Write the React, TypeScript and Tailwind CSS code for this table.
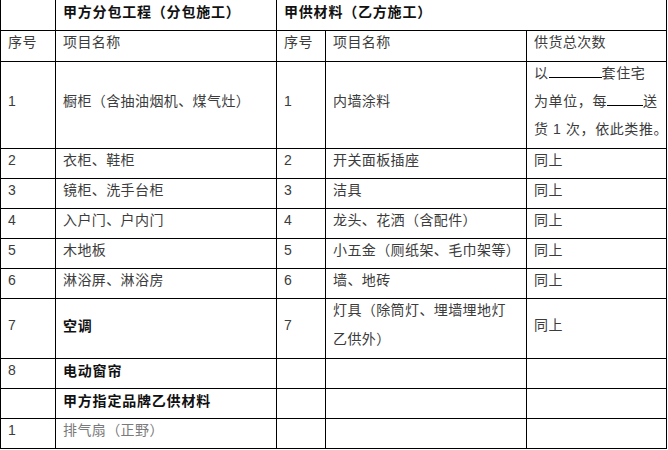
import React from "react";

const F = { fontFamily: '"Liberation Sans", "Noto Sans CJK SC", sans-serif' };

function Cell({
  children,
  bold,
  span,
  light,
  className = "",
}: {
  children?: React.ReactNode;
  bold?: boolean;
  span?: boolean;
  light?: boolean;
  className?: string;
}) {
  return (
    <div
      className={
        "flex items-center border-r border-b border-black pl-[7px] pb-2 " +
        (span ? "col-span-3 " : "") +
        (bold
          ? "font-bold text-[14px] tracking-[0.8px] text-[#111] "
          : light
          ? "text-[14px] tracking-[0.4px] text-[#7a7a7a] "
          : "text-[14px] tracking-[0.4px] text-[#3c3c3c] ") +
        className
      }
      style={bold ? { fontFamily: '"Noto Sans CJK SC", sans-serif' } : undefined}
    >
      <div className="leading-[28px]">{children}</div>
    </div>
  );
}

export default function App() {
  return (
    <div className="w-[668px] h-[450px] bg-white" style={F}>
      <div className="grid grid-cols-[55px_221px_49px_201px_140px] grid-rows-[31px_31px_87px_30px_30px_30px_30px_30px_60px_30px_30px_30px] border-l border-black w-[667px]">
        {/* header */}
        <Cell />
        <Cell bold>甲方分包工程（分包施工）</Cell>
        <Cell bold span>甲供材料（乙方施工）</Cell>

        <Cell>序号</Cell>
        <Cell>项目名称</Cell>
        <Cell>序号</Cell>
        <Cell>项目名称</Cell>
        <Cell>供货总次数</Cell>

        <Cell>1</Cell>
        <Cell>橱柜（含抽油烟机、煤气灶）</Cell>
        <Cell>1</Cell>
        <Cell>内墙涂料</Cell>
        <Cell className="tracking-[0.6px]">
          <div className="whitespace-nowrap">
            以<span className="inline-block w-[53px] border-b border-black" />套住宅
          </div>
          <div className="whitespace-nowrap">
            为单位，每<span className="inline-block w-[36px] border-b border-black" />送
          </div>
          <div className="whitespace-nowrap">货 1 次，依此类推。</div>
        </Cell>

        <Cell>2</Cell>
        <Cell>衣柜、鞋柜</Cell>
        <Cell>2</Cell>
        <Cell>开关面板插座</Cell>
        <Cell>同上</Cell>

        <Cell>3</Cell>
        <Cell>镜柜、洗手台柜</Cell>
        <Cell>3</Cell>
        <Cell>洁具</Cell>
        <Cell>同上</Cell>

        <Cell>4</Cell>
        <Cell>入户门、户内门</Cell>
        <Cell>4</Cell>
        <Cell>龙头、花洒（含配件）</Cell>
        <Cell>同上</Cell>

        <Cell>5</Cell>
        <Cell>木地板</Cell>
        <Cell>5</Cell>
        <Cell>小五金（厕纸架、毛巾架等）</Cell>
        <Cell>同上</Cell>

        <Cell>6</Cell>
        <Cell>淋浴屏、淋浴房</Cell>
        <Cell>6</Cell>
        <Cell>墙、地砖</Cell>
        <Cell>同上</Cell>

        <Cell>7</Cell>
        <Cell bold>空调</Cell>
        <Cell>7</Cell>
        <Cell>
          <div className="leading-[29px] whitespace-nowrap">灯具（除筒灯、埋墙埋地灯</div>
          <div className="leading-[29px]">乙供外）</div>
        </Cell>
        <Cell>同上</Cell>

        <Cell>8</Cell>
        <Cell bold>电动窗帘</Cell>
        <Cell />
        <Cell />
        <Cell />

        <Cell />
        <Cell bold>甲方指定品牌乙供材料</Cell>
        <Cell />
        <Cell />
        <Cell />

        <Cell>1</Cell>
        <Cell light>排气扇（正野）</Cell>
        <Cell />
        <Cell />
        <Cell />
      </div>
    </div>
  );
}
